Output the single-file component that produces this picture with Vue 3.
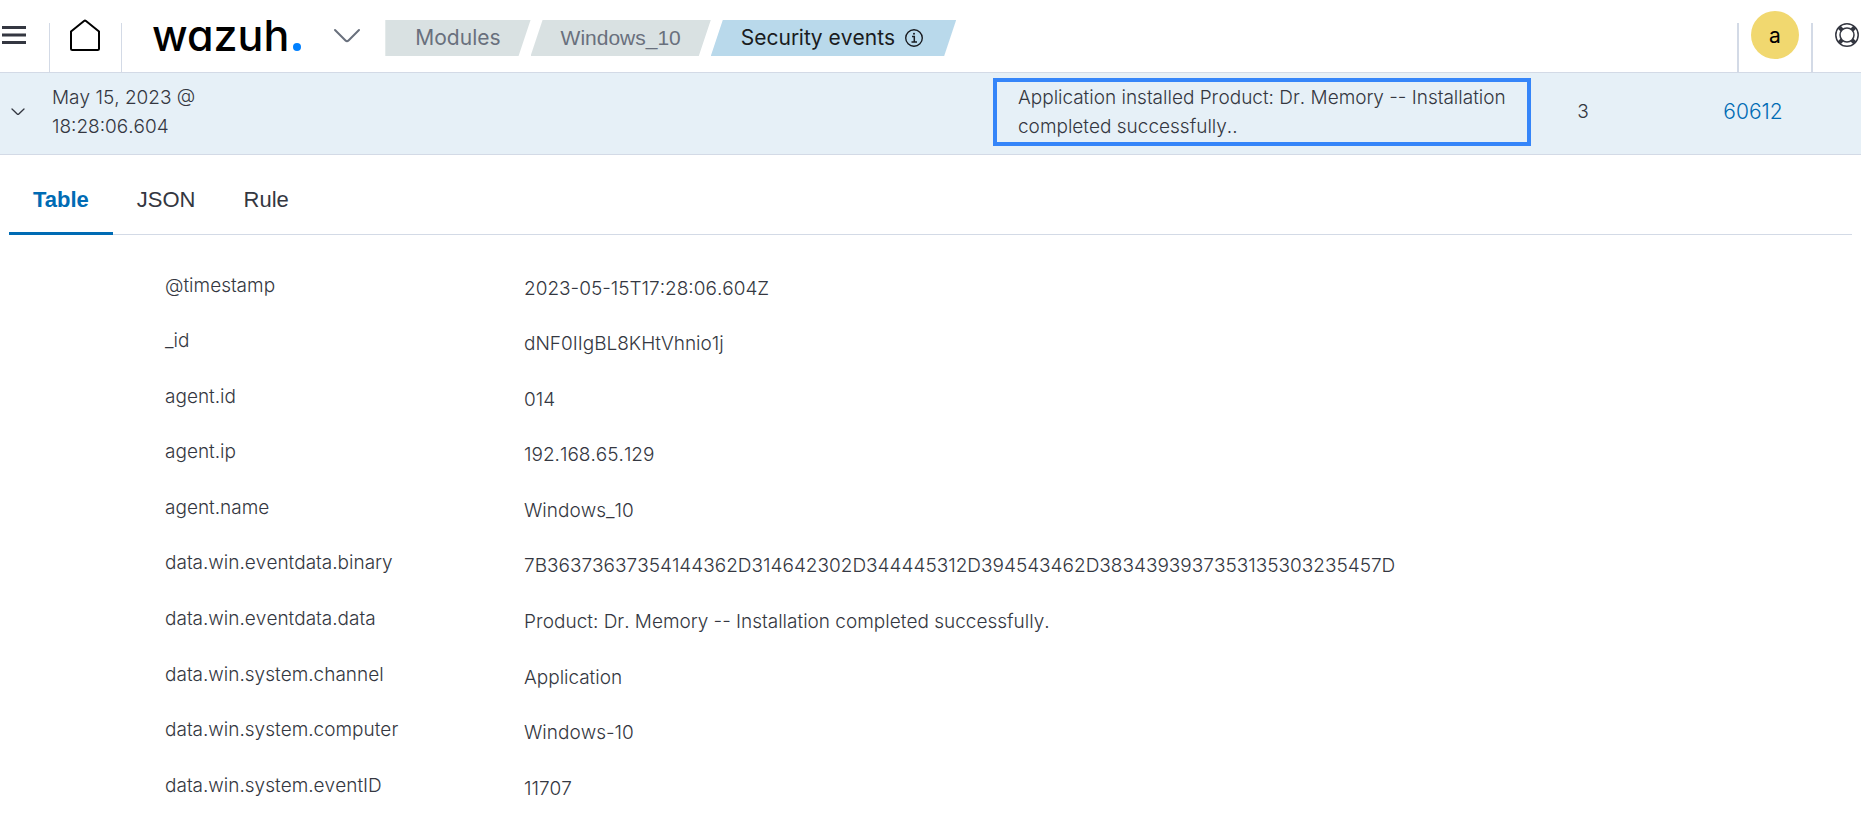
<script setup>
const crumbs = ['Modules', 'Windows_10']
const tabs = ['Table', 'JSON', 'Rule']
const fields = [
  ['@timestamp', '2023-05-15T17:28:06.604Z'],
  ['_id', 'dNF0IIgBL8KHtVhnio1j'],
  ['agent.id', '014'],
  ['agent.ip', '192.168.65.129'],
  ['agent.name', 'Windows_10'],
  ['data.win.eventdata.binary', '7B36373637354144362D314642302D344445312D394543462D3834393937353135303235457D'],
  ['data.win.eventdata.data', 'Product: Dr. Memory -- Installation completed successfully.'],
  ['data.win.system.channel', 'Application'],
  ['data.win.system.computer', 'Windows-10'],
  ['data.win.system.eventID', '11707'],
]
</script>

<template>
  <div class="page">
    <header class="bar">
      <button class="icon-btn menu" aria-label="Menu">
        <svg width="24" height="18" viewBox="0 0 24 18"><path d="M0 1.5h24M0 9h24M0 16.5h24" stroke="#343741" stroke-width="3" /></svg>
      </button>
      <a class="home" href="#" aria-label="Home">
        <svg width="30" height="33" viewBox="0 0 30 33" fill="none" stroke="#000" stroke-width="2" stroke-linejoin="round"><path d="M1 12.5V29.5Q1 31 2.500 31H27.500Q29 31 29 29.500V12.500L16 2Q15 1.200 14 2Z" /></svg>
      </a>
      <a class="logo" href="#">wazuh<span class="dot"></span></a>
      <button class="icon-btn switcher" aria-label="Open module menu">
        <svg width="28" height="16" viewBox="0 0 28 16" fill="none" stroke="#69707d" stroke-width="2" stroke-linecap="round" stroke-linejoin="round"><path d="M2 2L12.500 12.500Q14 14 15.500 12.500L26 2" /></svg>
      </button>
      <nav class="crumbs" aria-label="Breadcrumb">
        <a v-for="(c, i) in crumbs" :key="c" href="#" class="crumb" :class="{ first: i === 0 }">{{ c }}</a>
        <span class="crumb current">Security events
          <svg width="18" height="18" viewBox="0 0 18 18" fill="none" stroke="#1a1c21"><circle cx="9" cy="9" r="8.300" stroke-width="1.400" /><path d="M7 7.500h2.300v5.500M6.500 13h5.500" stroke-width="1.500" /><circle cx="9" cy="4.800" r="1" fill="#1a1c21" stroke="none" /></svg>
        </span>
      </nav>
      <div class="user"><button class="avatar" aria-label="Account">a</button></div>
      <button class="icon-btn help" aria-label="Help">
        <svg width="24" height="24" viewBox="0 0 24 24" fill="none" stroke="#343741"><circle cx="12" cy="12" r="11.200" stroke-width="1.500" /><circle cx="12" cy="12" r="7" stroke-width="1.500" /><path d="M4.200 4.200L7 7M19.800 4.200L17 7M4.200 19.800L7 17M19.800 19.800L17 17" stroke-width="4" /></svg>
      </button>
    </header>

    <table class="event">
      <tbody>
        <tr>
          <td class="c-toggle">
            <button class="icon-btn" aria-label="Collapse">
              <svg width="14" height="8" viewBox="0 0 14 8" fill="none" stroke="#343741" stroke-width="1.300" stroke-linecap="round" stroke-linejoin="round"><path d="M1 1L6.200 6Q7 6.800 7.800 6L13 1" /></svg>
            </button>
          </td>
          <td class="c-time">May 15, 2023 @<br>18:28:06.604</td>
          <td class="c-desc"><div class="highlight">Application installed Product: Dr. Memory -- Installation completed successfully..</div></td>
          <td class="c-level">3</td>
          <td class="c-rule"><a href="#">60612</a></td>
        </tr>
      </tbody>
    </table>

    <main class="details">
      <div class="tabs" role="tablist">
        <button v-for="(t, i) in tabs" :key="t" role="tab" class="tab" :class="{ active: i === 0 }" :aria-selected="i === 0">{{ t }}</button>
      </div>
      <table class="fields">
        <tbody>
          <tr v-for="[k, v] in fields" :key="k">
            <th scope="row">{{ k }}</th>
            <td>{{ v }}</td>
          </tr>
        </tbody>
      </table>
    </main>
  </div>
</template>

<style>
body { margin: 0; background: #fff; }
</style>

<style scoped>
.page { height: 100vh; overflow: hidden; font: 300 19px/29px Inter, sans-serif; font-optical-sizing: none; font-kerning: none; color: #343741; }
a { color: inherit; text-decoration: none; }
svg { display: block; }
button { margin: 0; padding: 0; border: 0; background: none; font: inherit; color: inherit; cursor: pointer; }
.icon-btn { display: flex; align-items: center; justify-content: center; }

.bar { display: flex; height: 72px; border-bottom: 1px solid #d3dae6; }
.menu { width: 49px; height: 70px; justify-content: flex-start; padding-left: 2px; box-sizing: border-box; }
.home { align-self: flex-end; height: 49px; width: 71px; border-left: 1px solid #d3dae6; border-right: 1px solid #d3dae6; display: flex; justify-content: center; }
.home svg { margin: -4px 2px 0 0; }
.logo { display: flex; align-items: baseline; margin-left: 30px; font: 500 43px/70px Inter, sans-serif; font-optical-sizing: none; font-feature-settings: "cv11"; color: #000; }
.dot { width: 8px; height: 8px; margin-left: 4px; border-radius: 50%; background: #0080ff; }
.switcher { margin-left: 32px; }
.crumbs { display: flex; align-items: center; align-self: flex-start; margin: 20px 0 0 24px; font-family: "Liberation Sans", Arial, sans-serif; font-size: 21px; font-weight: 400; line-height: 36px; }
.crumb { padding: 0 30px; background: #d9e1e2; color: #69707d; clip-path: polygon(12px 0, 100% 0, calc(100% - 12px) 100%, 0 100%); }
.crumb.first { clip-path: polygon(0 0, 100% 0, calc(100% - 12px) 100%, 0 100%); font-family: Inter, sans-serif; }
.crumb.current { display: flex; align-items: center; gap: 10px; padding-right: 33px; background: #b9d9eb; color: #1a1c21; font-family: Inter, sans-serif; }
.user { align-self: flex-end; display: flex; justify-content: center; height: 49px; width: 72px; margin-left: auto; border-left: 2px solid #d3dae6; border-right: 2px solid #d3dae6; }
.avatar { width: 48px; height: 48px; margin-top: -12px; border-radius: 50%; background: #f1d86f; color: #000; font-size: 21px; font-weight: 400; }
.help { width: 48px; height: 70px; justify-content: flex-end; padding-right: 2px; box-sizing: border-box; }

.event { width: 100%; table-layout: fixed; border-collapse: collapse; background: #e6f0f7; border-bottom: 1px solid #d3dae6; }
.event td { box-sizing: border-box; height: 81px; padding: 0 0 3px; }
.c-toggle { width: 52px; }
.c-toggle .icon-btn { margin-left: 11px; }
.c-desc { width: 538px; }
.c-level { width: 104px; text-align: center; }
.c-rule { width: 226px; text-align: center; font-size: 21px; }
.event .c-rule { padding-left: 10px; }
.c-rule a { color: #006bb4; }
.highlight { padding: 1px 10px 1px 21px; border: 4px solid #3585f9; }

.details { padding: 0 9px; }
.tabs { display: flex; height: 80px; box-sizing: border-box; border-bottom: 1px solid #d3dae6; font: 400 22px/30px "Liberation Sans", Arial, sans-serif; }
.tab { height: 80px; padding: 14px 24px 0; border-bottom: 3px solid transparent; box-sizing: border-box; }
.tab.active { border-color: #006bb4; color: #006bb4; font-weight: 700; }
.fields { margin: 23px 0 0 156px; height: 556px; border-collapse: collapse; }
.fields th { width: 359px; padding: 13px 0; font-weight: 300; text-align: left; vertical-align: top; }
.fields td { padding: 16px 0 10px; vertical-align: top; }
</style>
